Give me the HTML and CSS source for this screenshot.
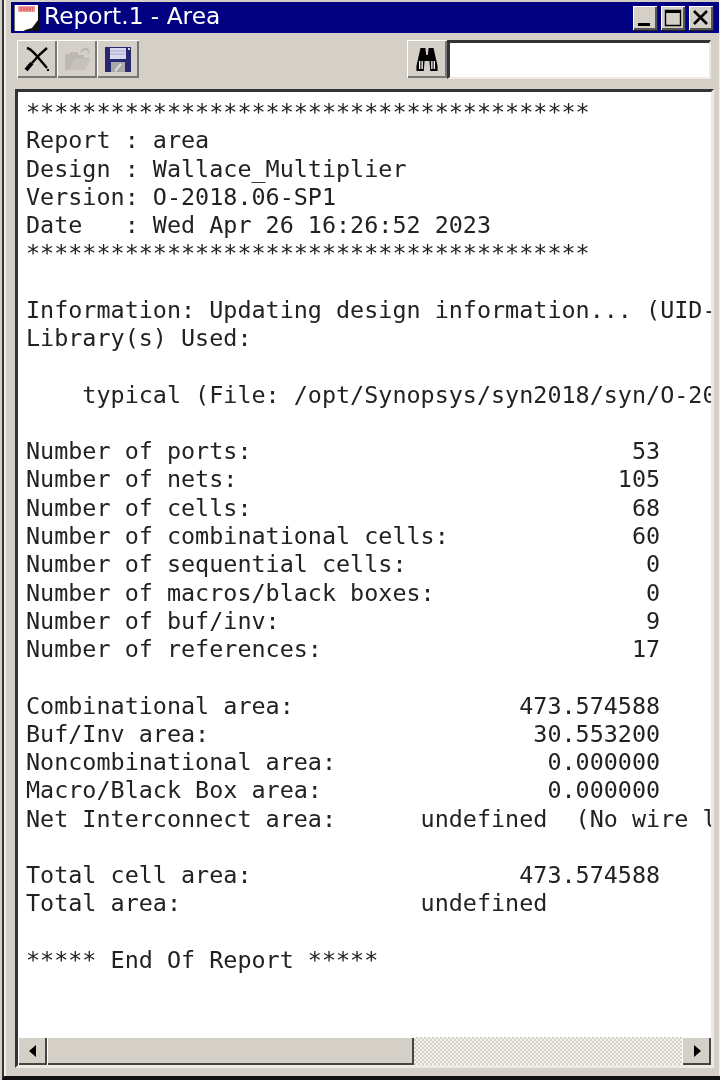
FILE: index.html
```html
<!DOCTYPE html>
<html lang="en">
<head>
<meta charset="utf-8">
<title>Report.1 - Area</title>
<link rel="stylesheet" href="styles.css">
</head>
<body>
<div class="window">
  <div class="titlebar">
    <svg class="doc-icon" width="25" height="26" viewBox="0 0 25 26"><path d="M0 0h25v19l-8 7H0z" fill="#fff"/><rect x="4" y="1" width="17" height="6" fill="#ee9a9a"/><path d="M6 3h13M6 5h13" stroke="#d83030" stroke-dasharray="2 1"/><path d="M24 0h1v26H10l1-1 7-2 6-8z" fill="#111"/><path d="M0 0h1v26H0z" fill="#666"/></svg>
    <span class="title">Report.1 - Area</span>
    <div class="controls">
      <div class="ctl"><svg width="24" height="24" viewBox="0 0 24 24"><rect x="5" y="17" width="12" height="3" fill="#000"/></svg></div>
      <div class="ctl"><svg width="24" height="24" viewBox="0 0 24 24"><path d="M4.500 4.500h15v15h-15z" fill="none" stroke="#000" stroke-width="1.400"/><rect x="4" y="4" width="16" height="3" fill="#000"/></svg></div>
      <div class="ctl"><svg width="24" height="24" viewBox="0 0 24 24"><path d="M5 5l13 13M18 5L5 18" stroke="#000" stroke-width="2.600"/></svg></div>
    </div>
  </div>
  <div class="toolbar">
    <div class="tool"><svg width="32" height="32" viewBox="0 0 32 32"><path d="M6 5c4 1 6 4 9 7l11 13" fill="none" stroke="#000" stroke-width="2.400"/><path d="M26 5c-5 4-10 9-15 15" fill="none" stroke="#000" stroke-width="2.400"/><path d="M11 20l-6 7" stroke="#000" stroke-width="4"/><rect x="26" y="26" width="2" height="2" fill="#000"/></svg></div>
    <div class="tool"><svg width="32" height="32" viewBox="0 0 32 32"><path d="M4 27V11h4l2-2h7v3h6v3h5l-5 12z" fill="#bdb9b2"/><path d="M8 27l5-11h17l-6 11z" fill="#c7c3bc"/><path d="M20 9q3-5 7-2l1 3" fill="none" stroke="#bdb9b2" stroke-width="2"/></svg></div>
    <div class="tool"><svg width="32" height="32" viewBox="0 0 32 32"><path d="M3 4h26v25H3z" fill="#28286f"/><rect x="8" y="5" width="16" height="11" fill="#d8d8ee"/><path d="M8 8h16M8 11h16" stroke="#aaaacc"/><rect x="9" y="19" width="14" height="10" fill="#a8a8a8"/><path d="M13 28l6-7" stroke="#ddd" stroke-width="2"/><rect x="26" y="5" width="2" height="2" fill="#ddd"/></svg></div>
    <div class="tool find"><svg width="26" height="32" viewBox="0 0 32 32" preserveAspectRatio="none"><path d="M8 5h6l1 7h2l1-7h6l5 18v5H20l-1-10h-6l-1 10H3v-5z" fill="#000"/><path d="M7 18v8M10 18v8M22 18v8M25 18v8" stroke="#fff" stroke-width="1.600"/></svg></div>
    <input class="search" type="text" aria-label="Find">
  </div>
  <div class="report">
<pre class="text">****************************************
Report : area
Design : Wallace_Multiplier
Version: O-2018.06-SP1
Date   : Wed Apr 26 16:26:52 2023
****************************************

Information: Updating design information... (UID-85)
Library(s) Used:

    typical (File: /opt/Synopsys/syn2018/syn/O-2018.06-SP1/typical.db)

Number of ports:                           53
Number of nets:                           105
Number of cells:                           68
Number of combinational cells:             60
Number of sequential cells:                 0
Number of macros/black boxes:               0
Number of buf/inv:                          9
Number of references:                      17

Combinational area:                473.574588
Buf/Inv area:                       30.553200
Noncombinational area:               0.000000
Macro/Black Box area:                0.000000
Net Interconnect area:      undefined  (No wire load specified)

Total cell area:                   473.574588
Total area:                 undefined

***** End Of Report *****</pre>
    <div class="hscroll">
      <div class="sbtn"><svg width="12" height="14" viewBox="0 0 12 14"><path d="M9 1v12L2 7z" fill="#000"/></svg></div>
      <div class="thumb"></div>
      <div class="track"></div>
      <div class="sbtn"><svg width="12" height="14" viewBox="0 0 12 14"><path d="M3 1v12l7-6z" fill="#000"/></svg></div>
    </div>
  </div>
</div>
</body>
</html>
```
FILE: styles.css
```css
* { box-sizing: border-box; }
html, body { margin: 0; padding: 0; background: #d4d0c8; }
body { width: 720px; height: 1080px; overflow: hidden; }
.window {
  width: 718px; height: 1080px; margin-left: 2px;
  display: flex; flex-direction: column;
  padding: 2px 1px 2px 7px;
  background: #d4d0c8;
  border-left: 2px solid #333;
  border-bottom: 4px solid #111;
  box-shadow: inset 2px 0 0 #f2efe8, inset -1px 0 0 #f2efe8;
  filter: blur(0.4px);
}
.titlebar {
  height: 31px; flex: none;
  background: #000080; color: #fff;
  display: flex; align-items: center;
  padding: 0 4px 0 3px;
  gap: 5px;
}
.doc-icon { flex: none; }
.title { font: 23.3px/27px "DejaVu Sans", sans-serif; flex: 1; white-space: nowrap; padding-bottom: 4px; }
.controls { display: flex; gap: 4px; margin-right: 2px; }
.ctl {
  width: 24px; height: 24px; background: #d4d0c8;
  box-shadow: inset 1px 1px 0 #fff, inset -2px -2px 0 #555, 1px 1px 0 #222;
}
.ctl svg { display: block; }
.toolbar {
  flex: none; height: 38px; margin-top: 7px;
  display: flex; align-items: stretch;
  padding-left: 6px; padding-right: 8px;
}
.tool {
  width: 40px; height: 38px; background: #d4d0c8;
  display: flex; align-items: center; justify-content: center;
  box-shadow: inset 1px 1px 0 #fff, inset -2px -2px 0 #777, inset -1px -1px 0 #222;
}
.tool:nth-child(3) { width: 42px; }
.find { margin-left: auto; }
.search {
  width: 264px; height: 39px; margin: 0; padding: 0;
  background: #fff; border-style: solid; border-width: 3px 2px 2px 3px;
  border-color: #333 #eeeae2 #eeeae2 #333; outline: none;
}
.report {
  flex: 1; min-height: 0; margin: 11px 5px 6px 4px;
  background: #fff; border-style: solid; border-width: 3px 3px 3px 3px;
  border-color: #333 #eeeae2 #eeeae2 #333;
  display: flex; flex-direction: column;
}
.text {
  flex: 1; min-height: 0; margin: 0; padding: 6px 0 0 8px;
  overflow: hidden; color: #222;
  font: 23.42px/28.27px "DejaVu Sans Mono", monospace;
}
.hscroll { flex: none; height: 28px; display: flex; background: #e6e3dd; }
.sbtn {
  width: 29px; height: 28px; background: #d4d0c8; flex: none;
  display: flex; align-items: center; justify-content: center;
  box-shadow: inset 1px 1px 0 #fff, inset -2px -2px 0 #444;
}
.thumb {
  width: 367px; flex: none; background: #d4d0c8;
  box-shadow: inset 1px 1px 0 #fff, inset -2px -2px 0 #444;
}
.track { flex: 1; background: repeating-conic-gradient(#d4d0c8 0 25%, #f4f2ee 0 50%) 0 0 / 4px 4px; }
```
